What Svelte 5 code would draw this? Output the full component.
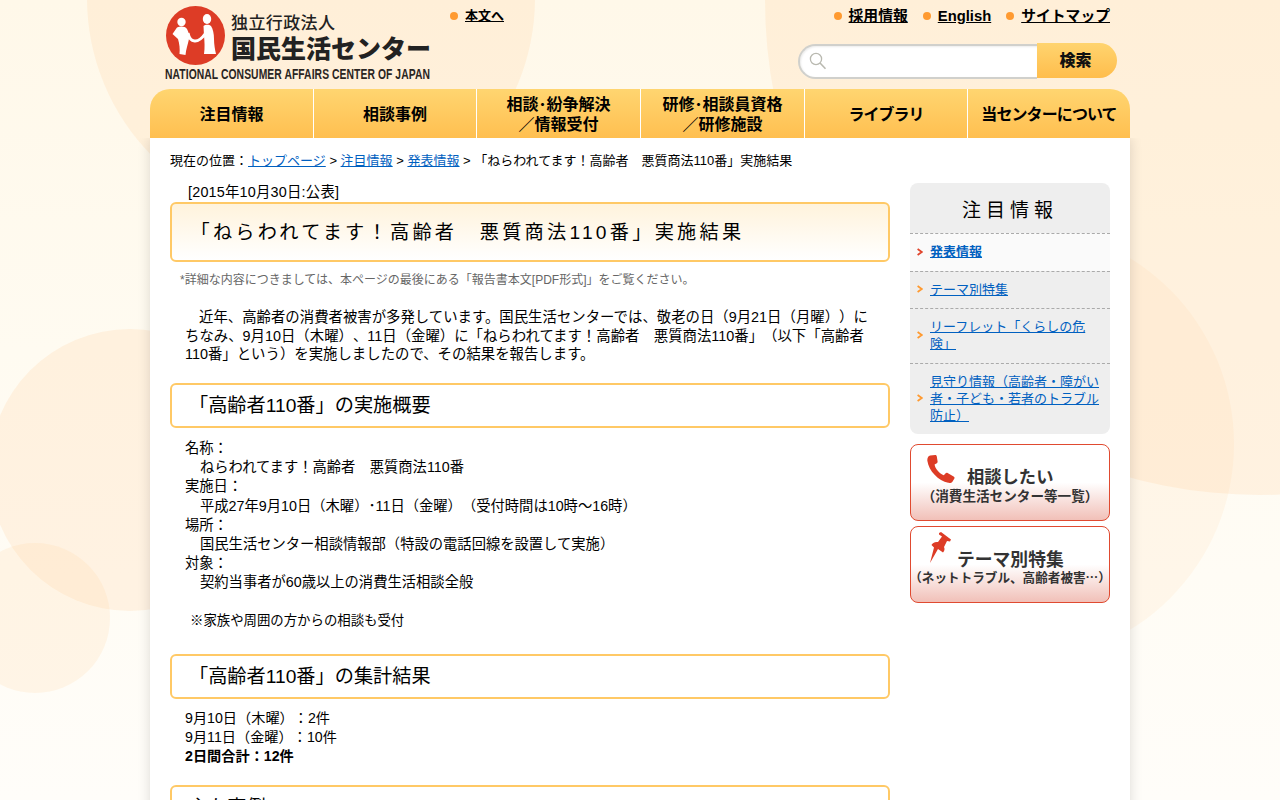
<script>
  const nav = [
    ['注目情報'], ['相談事例'], ['相談･紛争解決', '／情報受付'],
    ['研修･相談員資格', '／研修施設'], ['ライブラリ'], ['当センターについて']
  ];
  const side = [
    { t: '発表情報', cur: true },
    { t: 'テーマ別特集' },
    { t: 'リーフレット「くらしの危険」' },
    { t: '見守り情報（高齢者・障がい者・子ども・若者のトラブル防止）' }
  ];
</script>

<div class="page">
  <div class="bg" aria-hidden="true">
    <i class="c c1"></i><i class="c c2"></i><i class="c c3"></i><i class="c c4"></i><i class="c c5"></i>
  </div>

  <div class="wrap">
    <header class="hdr">
      <div class="logo">
        <div class="mark">
          <svg class="emblem" viewBox="0 0 59 59" width="59" height="59">
            <circle cx="29.5" cy="29.5" r="29.5" fill="#dd3c26" />
            <g fill="#fff">
              <circle cx="15.5" cy="16" r="4.2" />
              <path d="M6.5 28 L11 21.5 C14 20 19 20 21 23 C23 27 23.5 30 23 33 C22 38 20 43 19.5 49 L13.5 48 C14 43 13.5 38 12 33 Z" />
              <ellipse cx="41" cy="13" rx="4.2" ry="5" />
              <path d="M37.5 20 C39 18.5 43 18 45 20 C47 23 48 28 48 33 C48 38 49 44 50 48 L38 48 C39 42 38.5 35 38 30 Z" />
            </g>
            <path d="M22 27 C24 37 32 38 39 28" fill="none" stroke="#fff" stroke-width="3" />
          </svg>
          <div class="names">
            <div class="n1">独立行政法人</div>
            <div class="n2">国民生活センター</div>
          </div>
        </div>
        <div class="en"><span>NATIONAL CONSUMER AFFAIRS CENTER OF JAPAN</span></div>
      </div>

      <div class="skip"><a href="#main" class="bul">本文へ</a></div>

      <div class="right">
        <div class="util">
          <a href="#a" class="bul">採用情報</a>
          <a href="#b" class="bul">English</a>
          <a href="#c" class="bul">サイトマップ</a>
        </div>
        <form class="search" onsubmit={(e) => e.preventDefault()}>
          <div class="field">
            <svg viewBox="0 0 18 18" width="18" height="18" fill="none" stroke="#b9b9b0" stroke-width="1.3">
              <circle cx="7" cy="7" r="5.6" />
              <path d="M11 11 L16.5 16.8" stroke-width="1.6" />
            </svg>
          </div>
          <button type="submit">検索</button>
        </form>
      </div>
    </header>

    <nav class="nav">
      {#each nav as lines, i}
        <a href="#n" class:tight={i === 5} class:lib={i === 4} class:mid={i === 2 || i === 3}>
          {#each lines as l}<span>{l}</span>{/each}
        </a>
      {/each}
    </nav>

    <div class="content">
      <div class="crumb">
        現在の位置：<a href="#t">トップページ</a> &gt; <a href="#u">注目情報</a> &gt; <a href="#v">発表情報</a> &gt; 「ねらわれてます！高齢者　悪質商法110番」実施結果
      </div>

      <div class="cols">
        <main id="main" class="main">
          <div class="date">[2015年10月30日:公表]</div>
          <h1>「ねらわれてます！高齢者　悪質商法110番」実施結果</h1>
          <p class="note">*詳細な内容につきましては、本ページの最後にある「報告書本文[PDF形式]」をご覧ください。</p>
          <p class="lead">近年、高齢者の消費者被害が多発しています。国民生活センターでは、敬老の日（9月21日（月曜））にちなみ、9月10日（木曜）、11日（金曜）に「ねらわれてます！高齢者　悪質商法110番」（以下「高齢者110番」という）を実施しましたので、その結果を報告します。</p>

          <h2>「高齢者110番」の実施概要</h2>
          <dl>
            <dt>名称：</dt><dd>ねらわれてます！高齢者　悪質商法110番</dd>
            <dt>実施日：</dt><dd>平成27年9月10日（木曜）･11日（金曜）（受付時間は10時～16時）</dd>
            <dt>場所：</dt><dd>国民生活センター相談情報部（特設の電話回線を設置して実施）</dd>
            <dt>対象：</dt><dd>契約当事者が60歳以上の消費生活相談全般</dd>
          </dl>
          <p class="aside">※家族や周囲の方からの相談も受付</p>

          <h2>「高齢者110番」の集計結果</h2>
          <ul>
            <li>9月10日（木曜）：2件</li>
            <li>9月11日（金曜）：10件</li>
            <li><strong>2日間合計：12件</strong></li>
          </ul>

          <h2>主な事例</h2>
        </main>

        <aside class="side">
          <section class="menu">
            <h3>注目情報</h3>
            {#each side as s}
              <div class="item" class:cur={s.cur}>
                <svg viewBox="0 0 6 8" width="6" height="8" fill="none" stroke-width="1.7">
                  <path d="M0.6 1 L4.8 4 L0.6 7" />
                </svg>
                <a href="#s">{s.t}</a>
              </div>
            {/each}
          </section>

          <a class="banner one" href="#p">
            <span class="top">
              <svg class="phone" viewBox="0 0 28 28" width="28" height="28">
                <path fill="#dd3c26" d="M3.2 0.6 L8.2 0 C9.2 0 9.6 0.6 9.8 1.4 L10.6 6.4 C10.7 7.4 10.2 8 9.4 8.4 L7.6 9.4 C8 13.4 12.6 18.6 16.8 20.2 L18.4 18.4 C19 17.8 19.8 17.6 20.6 18 L26.6 21.4 C27.6 22 27.8 22.8 27.4 23.6 L25.6 26.4 C24.6 27.8 23 28.2 21.2 27.8 C11.6 26 1.6 15.6 0.4 6 C0 3.6 1 1.2 3.2 0.6 Z" />
              </svg>
              <b>相談したい</b>
            </span>
            <small>（消費生活センター等一覧）</small>
          </a>

          <a class="banner two" href="#q">
            <span class="top">
              <svg class="pin" viewBox="0 0 22 32" width="22" height="32">
                <path fill="#dd3c26" d="M10 1 L12 0 L22 7.5 L21 9.5 L18 9 L15 15 C16 17 15.5 19 14 20.5 L9 17 L1 31 L5 15.5 L2.5 13 C3 11 6 9.5 9 10 L13 4.5 L10 2.5 Z" />
              </svg>
              <b>テーマ別特集</b>
            </span>
            <small>（ネットトラブル、高齢者被害…）</small>
          </a>
        </aside>
      </div>
    </div>
  </div>
</div>

<style>
  :global(body) {
    margin: 0;
    background: #fffdf8;
  }
  .page {
    position: relative;
    height: 800px;
    overflow: hidden;
    background: linear-gradient(#fff8e9 0, #fffbf1 350px, #fffdf9 800px);
    font-family: "Liberation Sans", "Noto Sans CJK JP", sans-serif;
    color: #000;
    text-spacing-trim: space-all;
  }
  .bg { position: absolute; inset: 0; }
  .c { position: absolute; border-radius: 50%; background: rgba(255, 205, 150, .2); }
  .c1 { left: 87px; top: -226px; width: 448px; height: 448px; }
  .c2 { left: 765px; top: -495px; width: 990px; height: 990px; }
  .c3 { left: -11px; top: 329px; width: 282px; height: 282px; }
  .c4 { left: -40px; top: 543px; width: 150px; height: 150px; background: rgba(255, 205, 150, .17); }
  .c5 { left: 798px; top: 226px; width: 436px; height: 436px; background: rgba(255, 205, 150, .12); }

  .wrap { position: relative; width: 980px; margin: 0 auto; }

  /* header */
  .hdr { display: flex; height: 89px; }
  .logo { width: 300px; flex: none; padding: 6px 0 0 15px; box-sizing: border-box; }
  .mark { display: flex; gap: 6px; padding-left: 1px; height: 59px; }
  .emblem { flex: none; }
  .names { color: #222; font-family: "Noto Sans CJK JP", sans-serif; line-height: 1; }
  .n1 { font-size: 17px; font-weight: 500; letter-spacing: .4px; padding-top: 7px; }
  .n2 { font-size: 25px; font-weight: 900; margin-top: 5px; white-space: nowrap; }
  .en {
    margin-top: 2px;
    font: bold 14px/14px "Liberation Sans", sans-serif;
    color: #2a2522;
    white-space: nowrap;
  }
  .en span { display: inline-block; transform: scaleX(.738); transform-origin: left center; letter-spacing: .1px; }

  .bul {
    color: #000;
    font-weight: bold;
    position: relative;
    padding-left: 15px;
  }
  .bul::before {
    content: "";
    position: absolute;
    left: 0;
    top: 50%;
    margin-top: -4px;
    width: 8px;
    height: 8px;
    border-radius: 50%;
    background: #ff9a30;
  }
  .skip { padding-top: 7px; font-size: 13px; line-height: 18px; }
  .right { flex: 1; display: flex; flex-direction: column; align-items: flex-end; }
  .util { display: flex; gap: 15px; padding: 7px 20px 0 0; font-size: 14.8px; line-height: 18px; }
  .search { display: flex; margin: 18px 13px 0 0; }
  .field {
    width: 239px;
    height: 35px;
    box-sizing: border-box;
    background: #fff;
    border: 2px solid #d0d0cc;
    border-right: 0;
    border-radius: 18px 0 0 18px;
    box-shadow: inset 1px 1px 2px rgba(0, 0, 0, .08);
    padding: 6px 0 0 9px;
    margin-top: 1px;
  }
  .field svg { display: block; }
  .search button {
    width: 80px;
    height: 35px;
    border: 0;
    padding: 0 3px 3px 0;
    border-radius: 0 18px 18px 0;
    background: linear-gradient(#ffd46f, #ffbd4c);
    font: 900 16px "Noto Sans CJK JP", sans-serif;
    color: #111;
  }

  /* nav */
  .nav {
    display: grid;
    grid-template-columns: 163px 163px 164px 164px 163px 163px;
    height: 49px;
    border-radius: 20px 20px 0 0;
    overflow: hidden;
  }
  .nav a {
    display: flex;
    flex-direction: column;
    align-items: center;
    justify-content: center;
    background: linear-gradient(#ffd570, #ffbf50);
    border-left: 1px solid #fff;
    font: 700 16px/21px "Noto Sans CJK JP", sans-serif;
    color: #000;
    text-decoration: none;
    white-space: nowrap;
  }
  .nav a:first-child { border-left: 0; }
  .nav a.tight { letter-spacing: -.9px; }
  .nav a.lib { letter-spacing: -1px; }
  .nav a.mid { line-height: 19.5px; }

  /* content */
  .content {
    position: relative;
    background: #fff;
    box-shadow: 0 0 12px rgba(0, 0, 0, .14);
    clip-path: inset(0 -20px 0 -20px);
    padding: 14px 20px 40px;
    min-height: 800px;
  }
  .content a { color: #0060c0; }
  .crumb { font-size: 13px; line-height: 18px; height: 31px; }
  .cols { display: flex; gap: 20px; align-items: flex-start; }
  .main { width: 720px; flex: none; }
  .date { font-size: 14.4px; line-height: 19px; padding-left: 18px; letter-spacing: .2px; }
  h1 {
    margin: 0;
    box-sizing: border-box;
    height: 60px;
    border: 2px solid #ffc966;
    border-radius: 6px;
    background: linear-gradient(#fff3dc, #fff);
    padding-left: 18.5px;
    font-size: 19.2px;
    font-weight: normal;
    line-height: 57px;
    letter-spacing: 3.25px;
    white-space: nowrap;
  }
  h2 {
    margin: 0;
    box-sizing: border-box;
    height: 45px;
    border: 2px solid #ffc966;
    border-radius: 6px;
    padding-left: 17px;
    font-size: 19.2px;
    font-weight: normal;
    line-height: 41px;
  }
  .note { margin: 10px 0 0; padding-left: 10px; font-size: 12px; line-height: 17px; color: #666; }
  .lead { margin: 19px 0 0; padding: 0 15px; font-size: 14.4px; line-height: 18.7px; text-indent: 14px; }
  .lead + h2 { margin-top: 19px; }
  dl { margin: 11px 0 0; padding-left: 15px; font-size: 14.3px; line-height: 19.15px; }
  dd { margin: 0 0 0 15px; }
  .aside { margin: 19px 0 0; padding-left: 20px; font-size: 13.4px; line-height: 19px; }
  .aside + h2 { margin-top: 24px; }
  ul { list-style: none; margin: 10px 0 0; padding-left: 15px; font-size: 14.2px; line-height: 18.6px; }
  ul + h2 { margin-top: 20px; }

  /* sidebar */
  .side { width: 200px; flex: none; }
  .menu { background: #eee; border-radius: 8px; overflow: hidden; }
  .menu h3 {
    margin: 0;
    height: 50px;
    text-align: center;
    font-size: 19px;
    font-weight: normal;
    letter-spacing: 5px;
    line-height: 56px;
  }
  .item {
    display: flex;
    align-items: center;
    gap: 7px;
    padding: 9px 5px 10.5px 7px;
    border-top: 1px dashed #aaa;
    font-size: 13px;
    line-height: 17px;
  }
  .item svg { flex: none; stroke: #ff9a30; }
  .item.cur { background: #fafafa; font-weight: bold; }
  .item.cur svg { stroke: #e0452c; }

  .banner {
    display: flex;
    flex-direction: column;
    align-items: center;
    box-sizing: border-box;
    height: 77px;
    margin-top: 5px;
    border: 1px solid #e04a30;
    border-radius: 8px;
    background: linear-gradient(#fff 0, #fff 50%, #f1c0b8 100%);
    text-decoration: none;
    font-family: "Noto Sans CJK JP", sans-serif;
  }
  .banner.one { margin-top: 10px; }
  .top { display: flex; align-items: flex-end; align-self: flex-start; }
  .one .top { padding: 10px 0 0 16px; gap: 12px; }
  .two .top { padding: 5px 0 0 18px; gap: 6px; }
  .top svg { flex: none; }
  .content .banner { color: #333; }
  .banner b { line-height: 20px; font-weight: 700; }
  .one b { font-size: 17.3px; margin-bottom: -3px; }
  .two b { font-size: 17.8px; margin-bottom: -4px; }
  .banner small { font-size: 13.6px; font-weight: 700; line-height: 16px; white-space: nowrap; }
  .one small { margin-top: 4px; }
  .two small { margin-top: 5px; font-size: 12.6px; }
</style>
